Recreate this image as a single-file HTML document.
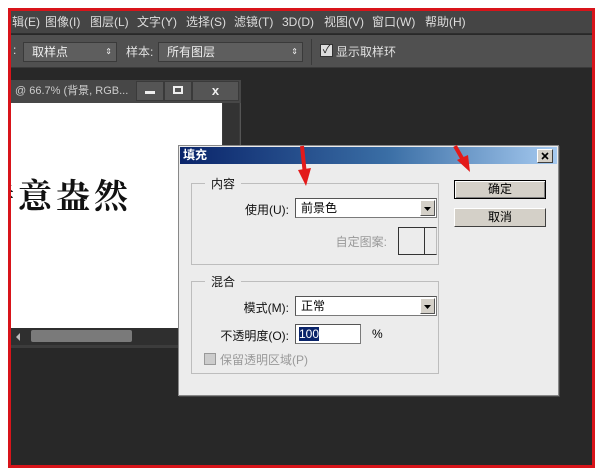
<!DOCTYPE html>
<html><head><meta charset="utf-8">
<style>
*{margin:0;padding:0;box-sizing:border-box}
body{width:601px;height:475px;background:#fff;position:relative;overflow:hidden;font-family:"Liberation Sans","Noto Sans CJK SC","WenQuanYi Zen Hei",sans-serif;font-size:12px}
.a{position:absolute}
.frame{left:8px;top:8px;width:587px;height:460px;border:3px solid #d8141a;background:#282828;overflow:hidden}
.menu{left:0;top:0;width:100%;height:23px;background:#454545;color:#ddd;font-size:12px;line-height:23px;white-space:nowrap;border-bottom:1px solid #2e2e2e}
.menu span{position:absolute;top:0}
.tool{left:0;top:24px;width:100%;height:33px;background:#505050;color:#e0e0e0;border-bottom:1px solid #3a3a3a}
.sel{position:absolute;height:20px;top:7px;background:#5e5e5e;border:1px solid #3a3a3a;color:#eee;line-height:18px;padding-left:8px;font-size:12px}
.dlg{background:#ececec;border:1px solid #888;box-shadow:1px 1px 0 #444}
.grp{border:1px solid #bdbdbd;position:absolute}
.lg{position:absolute;background:#ececec;padding:0 6px;font-size:12px;color:#111}
.lbl{position:absolute;font-size:12px;color:#111;text-align:right}
.dd{position:absolute;background:#fff;border:1px solid #7a7a7a;border-top-color:#555;border-left-color:#555;font-size:12px;line-height:18px;padding-left:5px}
.ddb{position:absolute;right:1px;top:1px;width:15px;height:16px;background:#d4d0c8;border:1px solid;border-color:#fff #555 #555 #fff}
.btn{position:absolute;background:#d4d0c8;border:1px solid;border-color:#fff #404040 #404040 #fff;text-align:center;font-size:12px;line-height:17px}
</style></head><body>
<div class="a frame">
 <div class="a menu">
  <span style="left:1px">辑(E)</span><span style="left:34px">图像(I)</span><span style="left:79px">图层(L)</span><span style="left:126px">文字(Y)</span><span style="left:175px">选择(S)</span><span style="left:223px">滤镜(T)</span><span style="left:271px">3D(D)</span><span style="left:313px">视图(V)</span><span style="left:361px">窗口(W)</span><span style="left:414px">帮助(H)</span>
 </div>
 <div class="a tool">
  <span class="a" style="left:2px;top:8px">:</span>
  <div class="sel" style="left:12px;width:94px">取样点<span style="position:absolute;right:4px;font-size:8px;top:0">&#8661;</span></div>
  <span class="a" style="left:115px;top:8px">样本:</span>
  <div class="sel" style="left:147px;width:145px">所有图层<span style="position:absolute;right:4px;font-size:8px;top:0">&#8661;</span></div>
  <div class="a" style="left:300px;top:4px;width:1px;height:26px;background:#3a3a3a"></div>
  <div class="a" style="left:309px;top:9px;width:13px;height:13px;background:#ddd;border:1px solid #333;font-size:11px;line-height:11px;color:#222;text-align:center">✓</div>
  <span class="a" style="left:325px;top:8px">显示取样环</span>
 </div>
 <!-- doc window -->
 <div class="a" style="left:0;top:69px;width:230px;height:268px;background:#3c3c3c;border-right:1px solid #555">
  <div class="a" style="left:0;top:0;width:230px;height:23px;background:#474747;color:#ccc;font-size:11px;line-height:22px;padding-left:4px;white-space:nowrap">@ 66.7% (背景, RGB...</div>
  <div class="a" style="left:125px;top:1px;width:28px;height:20px;background:#555;border:1px solid #3a3a3a"><div class="a" style="left:8px;top:9px;width:10px;height:3px;background:#eee"></div></div>
  <div class="a" style="left:153px;top:1px;width:28px;height:20px;background:#555;border:1px solid #3a3a3a"><div class="a" style="left:8px;top:4px;width:10px;height:8px;border:2px solid #eee"></div></div>
  <div class="a" style="left:181px;top:1px;width:47px;height:20px;background:#555;border:1px solid #3a3a3a;color:#eee;text-align:center;line-height:18px;font-size:13px;font-weight:bold">x</div>
  <div class="a" style="left:0;top:23px;width:211px;height:225px;background:#fff;overflow:hidden">
   <div class="a" style="left:-31px;top:66px;font-family:'Noto Serif CJK SC','Liberation Serif',serif;font-size:34px;font-weight:bold;color:#111;letter-spacing:4px;white-space:nowrap;filter:blur(0.3px)">诗意盎然</div>
  </div>
  <div class="a" style="left:212px;top:23px;width:16px;height:225px;background:#333"></div>
  <div class="a" style="left:0;top:248px;width:230px;height:17px;background:#2f2f2f">
   <div class="a" style="left:5px;top:5px;width:0;height:0;border:4px solid transparent;border-right-color:#bbb;border-left:0"></div>
   <div class="a" style="left:20px;top:2px;width:101px;height:12px;background:#7a7a7a;border-radius:2px"></div>
  </div>
 </div>
 <!-- dialog -->
 <div class="a dlg" style="left:167px;top:134px;width:381px;height:251px">
  <div class="a" style="left:1px;top:1px;width:377px;height:17px;background:linear-gradient(90deg,#0a246a 0%,#3a6ea5 55%,#a6caf0 100%);color:#fff;font-weight:bold;font-size:12px;line-height:17px;padding-left:3px">填充</div>
  <div class="a" style="left:358px;top:3px;width:16px;height:14px;background:#d4d0c8;border:1px solid;border-color:#fff #404040 #404040 #fff">
   <svg width="14" height="12" style="position:absolute;left:0;top:0"><path d="M4 3L10 9M10 3L4 9" stroke="#000" stroke-width="1.6"/></svg></div>
  <div class="grp" style="left:12px;top:37px;width:248px;height:82px"></div>
  <span class="lg" style="left:26px;top:29px">内容</span>
  <span class="lbl" style="left:40px;top:55px;width:70px">使用(U):</span>
  <div class="dd" style="left:116px;top:52px;width:142px;height:20px">前景色<div class="ddb"><svg width="13" height="14"><path d="M3 6h7l-3.5 4z" fill="#000"/></svg></div></div>
  <span class="lbl" style="left:130px;top:87px;width:78px;color:#999">自定图案:</span>
  <div class="a" style="left:219px;top:81px;width:39px;height:28px;border:1px solid #333;border-right-color:#bbb;background:#ececec"><div class="a" style="left:25px;top:-1px;width:1px;height:28px;background:#333"></div></div>
  <div class="grp" style="left:12px;top:135px;width:248px;height:93px"></div>
  <span class="lg" style="left:26px;top:127px">混合</span>
  <span class="lbl" style="left:30px;top:153px;width:80px">模式(M):</span>
  <div class="dd" style="left:116px;top:150px;width:142px;height:20px">正常<div class="ddb"><svg width="13" height="14"><path d="M3 6h7l-3.5 4z" fill="#000"/></svg></div></div>
  <span class="lbl" style="left:20px;top:181px;width:90px">不透明度(O):</span>
  <div class="dd" style="left:116px;top:178px;width:66px;height:20px;padding-left:3px"><span style="background:#0a246a;color:#fff">100</span></div>
  <span class="a" style="left:193px;top:181px">%</span>
  <div class="a" style="left:25px;top:207px;width:12px;height:12px;background:#ccc;border:1px solid #999"></div>
  <span class="a" style="left:41px;top:205px;color:#999">保留透明区域(P)</span>
  <div class="btn" style="left:275px;top:34px;width:92px;height:19px;border:1px solid #000;box-shadow:inset 1px 1px 0 #fff,inset -1px -1px 0 #808080">确定</div>
  <div class="btn" style="left:275px;top:62px;width:92px;height:19px">取消</div>
 </div>
</div>
<!-- red arrows -->
<svg class="a" style="left:0;top:0" width="601" height="475">
 <path d="M302 146L305 175" stroke="#e31a1a" stroke-width="4"/><path d="M298 170L306 186L311 168z" fill="#e31a1a"/>
 <path d="M455 146L463 160" stroke="#e31a1a" stroke-width="4"/><path d="M457 160L470 172L468 155z" fill="#e31a1a"/>
</svg>
</body></html>
